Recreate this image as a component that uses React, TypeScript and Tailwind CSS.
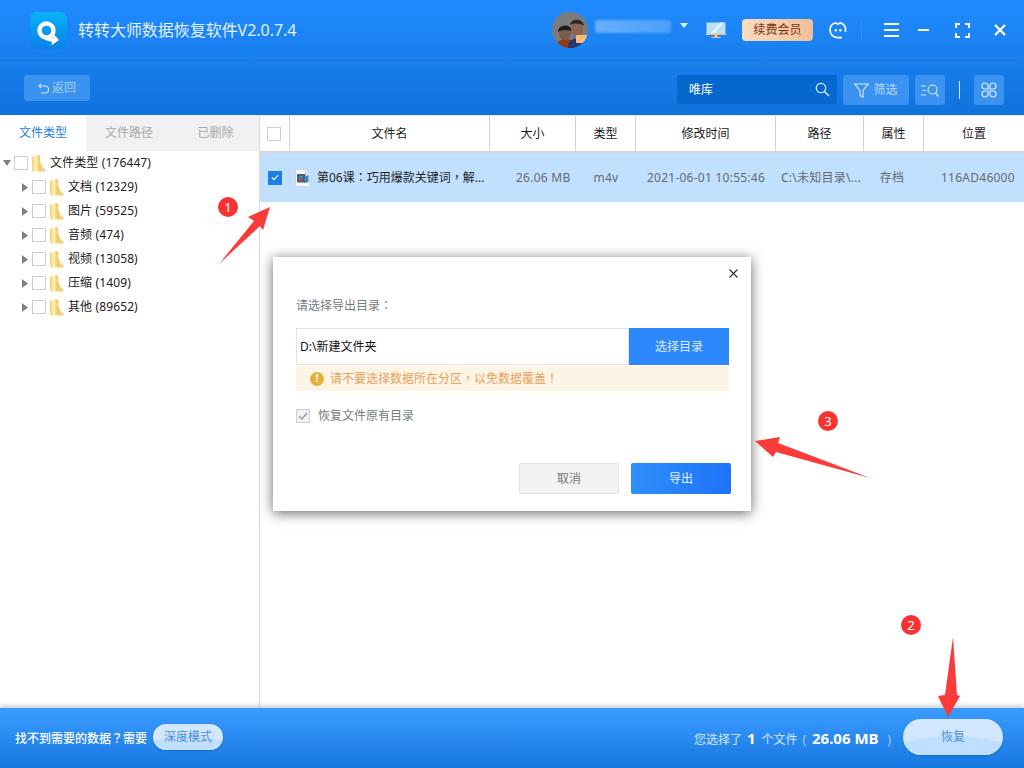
import React from "react";

const FONT = "font-['Noto_Sans','Noto_Sans_CJK_SC',sans-serif]";

function P({ c }: { c: string }) {
  return <span className="font-['Noto_Sans_CJK_TC',sans-serif]">{c}</span>;
}

function Folder() {
  return (
    <svg width="15" height="18" viewBox="0 0 15 18" className="shrink-0">
      <defs>
        <linearGradient id="fd" x1="0" y1="0" x2="1" y2="0">
          <stop offset="0" stopColor="#eecb5e" />
          <stop offset="0.3" stopColor="#fdf3c4" />
          <stop offset="0.58" stopColor="#efcc66" />
          <stop offset="1" stopColor="#f6df8f" />
        </linearGradient>
      </defs>
      <path d="M11 17.5 H15 L13.5 14 Z" fill="#cfcfcf" />
      <path d="M0.8 3 L6.8 0.8 L9 1.6 L9.5 9 L14 16.5 L13.5 17.5 L1.3 17.5 Z" fill="url(#fd)" />
    </svg>
  );
}

function Box() {
  return <span className="w-[14px] h-[14px] shrink-0 bg-white border border-[#cfcfcf] block" />;
}

function TreeRow({ label, root }: { label: string; root?: boolean }) {
  return (
    <div className={`h-[24px] flex items-center ${root ? "pl-[3px]" : "pl-[22px]"}`}>
      {root ? (
        <svg width="8" height="6" viewBox="0 0 8 6" className="shrink-0">
          <path d="M0 0 H8 L4 6 Z" fill="#808080" />
        </svg>
      ) : (
        <svg width="6" height="9" viewBox="0 0 6 9" className="shrink-0">
          <path d="M0 0 L6 4.5 L0 9 Z" fill="#808080" />
        </svg>
      )}
      <span className={root ? "ml-[3px]" : "ml-[4px]"}>
        <Box />
      </span>
      <span className="ml-[3px] flex">
        <Folder />
      </span>
      <span className="ml-[4px] text-[12px] tracking-[0.12px] text-[#222222] whitespace-nowrap">{label}</span>
    </div>
  );
}

function HeadCell({ w, label }: { w: string; label: string }) {
  return (
    <div className={`${w} shrink-0 h-full flex items-center justify-center border-r border-[#cdd2d7] text-[12px] text-[#1a1a1a]`}>
      {label}
    </div>
  );
}

function Cell({ w, label, cls }: { w: string; label: string; cls?: string }) {
  return (
    <div className={`${w} shrink-0 text-[12px] tracking-[0.25px] whitespace-nowrap text-[#666a70] ${cls ?? "text-center"}`}>
      {label}
    </div>
  );
}

function Badge({ n, cls }: { n: string; cls: string }) {
  return (
    <div className={`absolute ${cls} w-[20px] h-[20px] rounded-full bg-[#fa3232] text-white text-[13px] leading-[20px] text-center`}>
      {n}
    </div>
  );
}

export default function App() {
  return (
    <div className={`w-[1024px] h-[768px] relative overflow-hidden bg-white flex flex-col ${FONT}`}>
      {/* Top area */}
      <div className="h-[115px] shrink-0 flex flex-col bg-gradient-to-b from-[#208bff] to-[#1073dc]">
        <div className="h-[61px] shrink-0 flex items-center border-b border-[#1a78dc]">
          <svg width="37" height="37" viewBox="0 0 37 37" className="ml-[30px] shrink-0">
            <defs>
              <linearGradient id="lg" x1="0" y1="0" x2="0" y2="1">
                <stop offset="0" stopColor="#08b4f8" />
                <stop offset="1" stopColor="#0a80e8" />
              </linearGradient>
            </defs>
            <rect width="37" height="37" rx="7" fill="url(#lg)" />
            <circle cx="16.5" cy="18.5" r="7" fill="none" stroke="#fff" strokeWidth="4.4" />
            <path d="M16 24 L23 26 L23.5 22 L29 28 L21.5 33.5 L22 30 L15 28 Z" fill="#fff" />
          </svg>
          <div className="ml-[11px] text-[16px] leading-none text-[#e6f2ff] whitespace-nowrap w-[218px] tracking-[-0.04px]">转转大师数据恢复软件V2.0.7.4</div>
          <div className="ml-[256px] w-[36px] h-[36px] rounded-full bg-[#7b7b7b] overflow-hidden shrink-0">
            <svg width="36" height="36" viewBox="0 0 36 36">
              <path d="M4 36 C4 29 9 27 14 27 C19 27 24 30 24 36 Z" fill="#8e3a20" />
              <path d="M16 36 C16 28 22 26 26 26 C31 26 34 30 34 36 Z" fill="#24386b" />
              <ellipse cx="13" cy="21" rx="6" ry="7" fill="#7a5a4a" />
              <path d="M6 20 C6 12 19 11 20 19 C15 18 11 17 6 20 Z" fill="#1c1c22" />
              <ellipse cx="25" cy="17" rx="6" ry="7.5" fill="#8a6450" />
              <path d="M18 13 C19 6 31 6 32 14 C27 11 23 11 18 13 Z" fill="#2a2725" />
              <rect x="24" y="23" width="11" height="8" rx="1" fill="#f7bd7e" />
            </svg>
          </div>
          <div className="ml-[7px] w-[76px] h-[13px] -mt-[8px] rounded-[3px] bg-gradient-to-r from-[#66b0fd] to-[#4a9ffc] blur-[1px] shrink-0" />
          <svg width="8" height="5" viewBox="0 0 8 5" className="ml-[9px] -mt-[10px] shrink-0">
            <path d="M0 0 H8 L4 5 Z" fill="#e8f2ff" />
          </svg>
          <svg width="20" height="16" viewBox="0 0 20 16" className="ml-[18px] shrink-0">
            <rect x="0.5" y="0.5" width="19" height="11.5" fill="#b9e0fa" />
            <path d="M4 12 L14 0.5 H18 L8 12 Z" fill="#e2f3ff" />
            <rect x="0" y="11.5" width="20" height="1.5" fill="#f4c68c" />
            <rect x="8.5" y="13" width="3" height="2" fill="#f4c68c" />
            <rect x="5.5" y="15" width="9" height="1" fill="#f4c68c" />
          </svg>
          <div className="ml-[16px] w-[71px] h-[22px] rounded-[4px] bg-gradient-to-r from-[#fadcc0] to-[#f0bf99] text-[#7a3412] text-[12px] flex items-center justify-center shrink-0">
            续费会员
          </div>
          <svg width="18" height="18" viewBox="0 0 18 18" className="ml-[16px] shrink-0">
            <path d="M13 16.6 H8.5 A7.6 7.6 0 0 1 1 9 A8 7.6 0 0 1 6.5 1.8 L9 3 L11.5 1.8 A8 7.6 0 0 1 16.5 7 L16.5 11" fill="none" stroke="#fff" strokeWidth="1.7" />
            <circle cx="6.8" cy="9.3" r="1.2" fill="#fff" />
            <circle cx="11.4" cy="9.3" r="1.2" fill="#fff" />
          </svg>
          <div className="ml-[14px] w-px h-[20px] bg-[#3a8fe8] shrink-0" />
          <div className="ml-[22px] w-[15px] flex flex-col gap-[4px] shrink-0">
            <span className="h-[2px] bg-white block" />
            <span className="h-[2px] bg-white block" />
            <span className="h-[2px] bg-white block" />
          </div>
          <div className="ml-[19px] w-[11px] h-[2px] bg-white shrink-0" />
          <svg width="15" height="15" viewBox="0 0 15 15" className="ml-[26px] shrink-0">
            <path d="M1 5 V1 H5 M10 1 H14 V5 M14 10 V14 H10 M5 14 H1 V10" fill="none" stroke="#fff" strokeWidth="2" />
          </svg>
          <svg width="12" height="12" viewBox="0 0 12 12" className="ml-[24px] shrink-0">
            <path d="M1 1 L11 11 M11 1 L1 11" stroke="#fff" strokeWidth="2.4" />
          </svg>
        </div>
        <div className="flex-1 flex items-start pt-[14px]">
          <div className="ml-[24px] w-[66px] h-[26px] rounded-[3px] bg-[#3a93f0] flex items-center justify-center gap-[3px] text-[12px] text-[#a9d0f7]">
            <svg width="11" height="11" viewBox="0 0 11 11">
              <path d="M3 1 L1 3 L3 5 M1 3 H7 A3 3 0 0 1 7 10 H3" fill="none" stroke="#cfe5fb" strokeWidth="1.1" />
            </svg>
            返回
          </div>
          <div className="ml-[587px] w-[160px] h-[29px] rounded-[2px] bg-[#0668cf] flex items-center pl-[12px] pr-[7px] text-[12px] text-white shrink-0">
            <span className="flex-1">唯库</span>
            <svg width="15" height="15" viewBox="0 0 15 15">
              <circle cx="6" cy="6" r="4.7" fill="none" stroke="#dcebfb" strokeWidth="1.2" />
              <path d="M9.5 9.5 L14 14" stroke="#dcebfb" strokeWidth="1.4" />
            </svg>
          </div>
          <div className="ml-[6px] w-[66px] h-[30px] rounded-[3px] bg-[#3a93f0] flex items-center justify-center gap-[4px] text-[12px] text-[#b7d8f9] shrink-0">
            <svg width="15" height="15" viewBox="0 0 15 15">
              <path d="M0.8 1 H14.2 L9 7.5 V14 L6 12.5 V7.5 Z" fill="none" stroke="#dcebfb" strokeWidth="1.1" />
            </svg>
            筛选
          </div>
          <div className="ml-[6px] w-[30px] h-[30px] rounded-[3px] bg-[#3a93f0] flex items-center justify-center shrink-0">
            <svg width="18" height="13" viewBox="0 0 18 13">
              <path d="M0 2 H5 M1.5 6.5 H5 M0 11 H5" stroke="#dcebfb" strokeWidth="1" />
              <circle cx="11.5" cy="5.5" r="4.5" fill="none" stroke="#dcebfb" strokeWidth="1.1" />
              <path d="M14.5 9 L17.5 12.5" stroke="#dcebfb" strokeWidth="1.2" />
            </svg>
          </div>
          <div className="ml-[14px] mt-[6px] w-px h-[18px] bg-[#dcebfb] shrink-0" />
          <div className="ml-[14px] w-[30px] h-[30px] rounded-[3px] bg-[#3a93f0] flex items-center justify-center shrink-0">
            <svg width="16" height="16" viewBox="0 0 16 16" fill="none" stroke="#dcebfb" strokeWidth="1.2">
              <path d="M7 7 H3.7 A3 3 0 1 1 7 3.7 Z" />
              <path d="M9 7 H12.3 A3 3 0 1 0 9 3.7 Z" />
              <path d="M7 9 H3.7 A3 3 0 1 0 7 12.3 Z" />
              <path d="M9 9 H12.3 A3 3 0 1 1 9 12.3 Z" />
            </svg>
          </div>
        </div>
      </div>

      {/* Body */}
      <div className="flex-1 flex min-h-0">
        <div className="w-[260px] shrink-0 border-r border-[#dcdcdc]">
          <div className="h-[36px] flex text-[12px]">
            <div className="w-[86px] flex items-center justify-center text-[#1f7fe6]">文件类型</div>
            <div className="flex-1 bg-[#f1f1f1] flex items-center text-[#a8a8a8]">
              <span className="w-[86px] text-center">文件路径</span>
              <span className="flex-1 text-center">已删除</span>
            </div>
          </div>
          <TreeRow root label="文件类型 (176447)" />
          <TreeRow label="文档 (12329)" />
          <TreeRow label="图片 (59525)" />
          <TreeRow label="音频 (474)" />
          <TreeRow label="视频 (13058)" />
          <TreeRow label="压缩 (1409)" />
          <TreeRow label="其他 (89652)" />
        </div>
        <div className="flex-1 min-w-0">
          <div className="h-[38px] flex border-b-2 border-[#d3d7dc] border-t border-t-[#e6e8ea]">
            <div className="w-[30px] shrink-0 h-full flex items-center justify-center pr-[2px] border-r border-[#cdd2d7]">
              <Box />
            </div>
            <HeadCell w="w-[200px]" label="文件名" />
            <HeadCell w="w-[86px]" label="大小" />
            <HeadCell w="w-[60px]" label="类型" />
            <HeadCell w="w-[140px]" label="修改时间" />
            <HeadCell w="w-[88px]" label="路径" />
            <HeadCell w="w-[60px]" label="属性" />
            <div className="flex-1 flex items-center justify-center text-[12px] text-[#1a1a1a]">位置</div>
          </div>
          <div className="h-[49px] bg-[#c0e0fd] flex items-center">
            <div className="w-[30px] shrink-0 flex justify-center">
              <span className="w-[14px] h-[14px] bg-[#1c7fe6] flex items-center justify-center">
                <svg width="8" height="7" viewBox="0 0 8 7">
                  <path d="M0.8 3.5 L3 5.7 L7.2 1" fill="none" stroke="#fff" strokeWidth="1.1" />
                </svg>
              </span>
            </div>
            <div className="w-[200px] shrink-0 flex items-center">
              <svg width="15" height="18" viewBox="0 0 15 18" className="ml-[5px] shrink-0">
                <path d="M0.5 0.5 H10.5 L14.5 4.5 V17.5 H0.5 Z" fill="#f6f8fb" stroke="#cfd5dc" />
                <path d="M10.5 0.5 V4.5 H14.5" fill="#dfe4ea" stroke="#cfd5dc" />
                <rect x="2" y="5" width="8.5" height="8.5" fill="#4f6072" />
                <rect x="4" y="7" width="4" height="2.5" fill="#2a8bdc" />
                <rect x="3.5" y="9.5" width="4" height="2" fill="#d8443c" />
                <path d="M10.5 7 L13.5 6 V13 L9 14 L10.5 11 Z" fill="#1f86d8" />
              </svg>
              <span className="ml-[7px] text-[12px] text-[#1f1f1f] whitespace-nowrap">
                第06课<P c="：" />巧用爆款关键词<P c="，" />解...
              </span>
            </div>
            <Cell w="w-[86px]" cls="pl-[26px]" label="26.06 MB" />
            <Cell w="w-[60px]" label="m4v" />
            <Cell w="w-[140px]" label="2021-06-01 10:55:46" />
            <Cell w="w-[88px]" cls="pl-[5px]" label="C:\未知目录\..." />
            <Cell w="w-[60px]" cls="text-center pr-[4px]" label="存档" />
            <Cell w="w-[100px]" cls="pl-[17px]" label="116AD46000" />
          </div>
        </div>
      </div>

      {/* Footer */}
      <div className="h-[60px] shrink-0 flex items-center bg-gradient-to-b from-[#3a9cff] to-[#1577e0] shadow-[0_-3px_4px_rgba(120,140,160,0.35)] relative">
        <span className="ml-[15px] text-[12px] font-medium text-white whitespace-nowrap w-[132px]">
          找不到需要的数据<P c="？" />需要
        </span>
        <div className="ml-[6px] -mt-[2px] w-[70px] h-[26px] rounded-full bg-[#d3e8ff] relative overflow-hidden flex items-center justify-center text-[12px] text-[#4a90dc] shadow-[0_1px_2px_rgba(0,50,120,0.3)] shrink-0">
          <span className="absolute left-[-10px] right-[-10px] top-[12px] h-[30px] rounded-[50%] bg-[#bfdfff]" />
          <span className="relative">深度模式</span>
        </div>
        <div className="ml-[471px] flex items-baseline text-[#d6e9ff] text-[12px] whitespace-nowrap w-[209px]">
          您选择了
          <b className="ml-[5px] text-[15px] text-white font-bold">1</b>
          <span className="ml-[6px]">个文件</span>
          <span className="ml-[5px] font-light">(</span>
          <b className="ml-[6px] text-[15px] text-white font-bold">26.06 MB</b>
          <span className="ml-[9px] font-light">)</span>
        </div>
        <div className="-mt-[2px] w-[100px] h-[36px] rounded-full bg-[#d3e8ff] relative overflow-hidden flex items-center justify-center text-[12px] text-[#4a90dc] shadow-[0_1px_2px_rgba(0,50,120,0.3)] shrink-0">
          <span className="absolute left-[-15px] right-[-15px] top-[17px] h-[40px] rounded-[50%] bg-[#bfdfff]" />
          <span className="relative">恢复</span>
        </div>
      </div>

      {/* Dialog */}
      <div className="absolute left-[273px] top-[257px] w-[478px] h-[254px] bg-white shadow-[0_2px_12px_rgba(0,0,0,0.6)] flex flex-col pl-[23px] pr-[22px]">
        <svg width="9" height="9" viewBox="0 0 9 9" className="absolute right-[13px] top-[12px]">
          <path d="M0.5 0.5 L8.5 8.5 M8.5 0.5 L0.5 8.5" stroke="#333" strokeWidth="1.1" />
        </svg>
        <div className="mt-[39px] text-[12px] leading-[18px] text-[#777b80]">
          请选择导出目录<P c="：" />
        </div>
        <div className="mt-[14px] -mb-px h-[37px] flex relative -top-px">
          <div className="flex-1 border border-[#e2e2e2] flex items-center pl-[3px] text-[12px] text-[#111]">D:\新建文件夹</div>
          <div className="w-[100px] bg-[#2d88fb] text-[#dcecff] text-[12px] flex items-center justify-center">选择目录</div>
        </div>
        <div className="mt-px h-[25px] bg-[#fcf5e6] flex items-center pl-[14px] text-[12px] text-[#e9a05c]">
          <span className="w-[14px] h-[14px] rounded-full bg-[#e4b13f] text-white text-[11px] font-bold flex items-center justify-center mr-[6px]">!</span>
          <span>
            请不要选择数据所在分区<P c="，" />以免数据覆盖<P c="！" />
          </span>
        </div>
        <div className="mt-[16px] flex items-center text-[12px] text-[#777b80]">
          <span className="w-[14px] h-[14px] bg-[#f2f2f2] border border-[#cfcfcf] flex items-center justify-center">
            <svg width="10" height="8" viewBox="0 0 10 8">
              <path d="M1 4 L4 7 L9 1" fill="none" stroke="#9a9a9a" strokeWidth="1.4" />
            </svg>
          </span>
          <span className="ml-[8px]">恢复文件原有目录</span>
        </div>
        <div className="mt-[38px] -mr-[2px] flex justify-end gap-[12px]">
          <div className="w-[100px] h-[31px] rounded-[2px] bg-[#f2f2f2] border border-[#e2e2e2] text-[#777] text-[12px] flex items-center justify-center">取消</div>
          <div className="w-[100px] h-[31px] rounded-[2px] bg-gradient-to-r from-[#2f8ffb] to-[#1e72f8] text-[#e6f1ff] text-[12px] flex items-center justify-center">导出</div>
        </div>
      </div>

      {/* Annotations */}
      <svg width="1024" height="768" viewBox="0 0 1024 768" className="absolute left-0 top-0 pointer-events-none">
        <polygon points="270,207 248,217 254,221 219,264 260,226 263,230" fill="#fb3a3a" />
        <polygon points="953,637 957,695 960,696 948,717 938,696 945,695" fill="#fb3a3a" />
        <polygon points="755,441 780,437 778,443 870,478 776,452 773,457" fill="#fb3a3a" />
      </svg>
      <Badge n="1" cls="left-[218px] top-[197px]" />
      <Badge n="2" cls="left-[901px] top-[615px]" />
      <Badge n="3" cls="left-[818px] top-[411px]" />
    </div>
  );
}
